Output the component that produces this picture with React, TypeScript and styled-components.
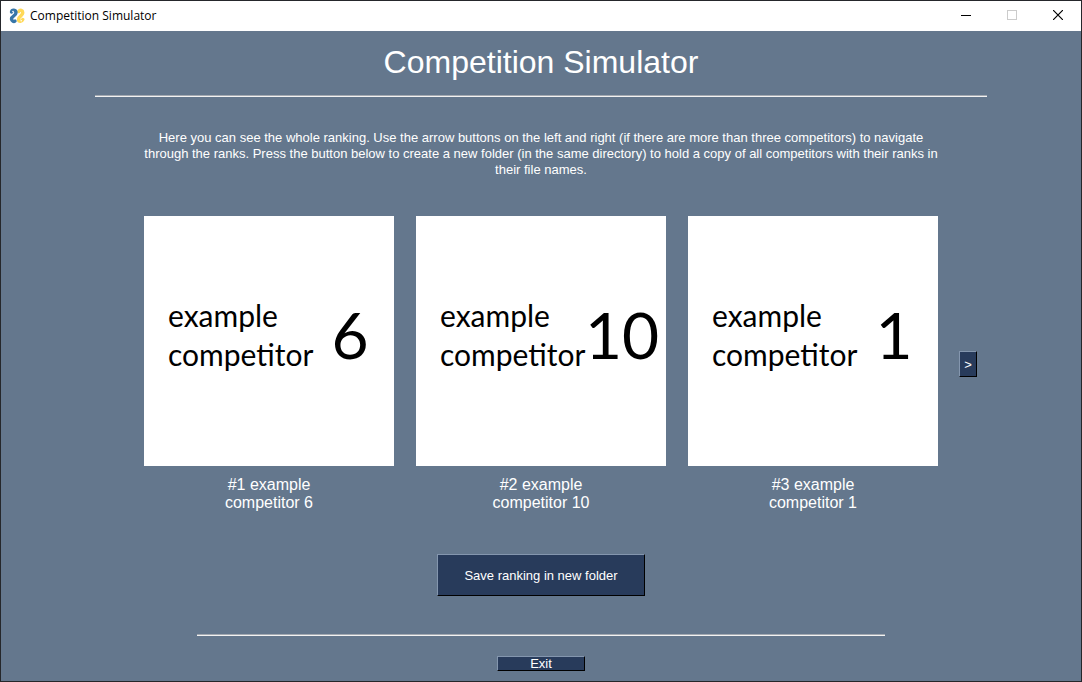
import React from "react";
import styled, { createGlobalStyle } from "styled-components";

const GlobalStyle = createGlobalStyle`
  * { box-sizing: border-box; }
  body {
    margin: 0;
    background: #64778d;
    font-family: "Liberation Sans", Arial, sans-serif;
    color: #ffffff;
  }
`;

const Window = styled.div`
  display: flex;
  flex-direction: column;
  min-height: 100vh;
  border: 1px solid #25272b;
  background: #64778d;
`;

const TitleBar = styled.header`
  display: flex;
  align-items: center;
  height: 30px;
  padding-left: 8px;
  background: #ffffff;
  color: #000000;
`;

const WindowTitle = styled.span`
  flex: 1;
  margin-left: 5px;
  font-family: "Open Sans", "Noto Sans", sans-serif;
  font-size: 12px;
  line-height: 16px;
`;

const CaptionButton = styled.button`
  display: flex;
  align-items: center;
  justify-content: center;
  width: 46px;
  height: 30px;
  padding: 0 0 2px;
  border: 0;
  background: transparent;
  color: #000000;

  &:disabled {
    color: #cccccc;
  }
`;

const Main = styled.main`
  display: flex;
  flex-direction: column;
  align-items: center;
`;

const Heading = styled.h1`
  margin: 12px 0 14px;
  font-size: 32px;
  font-weight: 400;
  line-height: 38px;
`;

const Separator = styled.hr<{ $width: number }>`
  width: ${(p) => p.$width}px;
  max-width: 100%;
  height: 2px;
  margin: 0;
  border: 0;
  border-top: 1px solid #a3a9b1;
  border-bottom: 1px solid #f2f2f2;
`;

const Intro = styled.p`
  max-width: 808px;
  margin: 33px 0 38px;
  font-size: 13px;
  line-height: 16px;
  text-align: center;
`;

const Ranking = styled.section`
  display: grid;
  grid-template-columns: 18px auto 18px;
  align-items: center;
  column-gap: 21px;
`;

const Cards = styled.div`
  display: flex;
  grid-column: 2;
  gap: 22px;
`;

const Card = styled.figure`
  width: 250px;
  margin: 0;
`;

const Picture = styled.div`
  display: flex;
  align-items: center;
  height: 250px;
  padding: 0 6px 12px 24px;
  background: #ffffff;
  color: #000000;
  font-family: Lato, sans-serif;
`;

const PictureLabel = styled.span`
  width: 144px;
  font-size: 30px;
  line-height: 39px;
`;

const PictureNumber = styled.span`
  flex: 1;
  font-size: 64px;
  line-height: 78px;
  text-align: center;
`;

const Caption = styled.figcaption`
  padding-top: 10px;
  font-size: 16px;
  line-height: 18px;
  text-align: center;
`;

const Button = styled.button<{ $width: number; $height: number }>`
  display: flex;
  align-items: center;
  justify-content: center;
  width: ${(p) => p.$width}px;
  height: ${(p) => p.$height}px;
  padding: 0;
  border: 1px solid;
  border-color: #8496ae #000000 #000000 #8496ae;
  background: #283b5b;
  color: #ffffff;
  font-family: inherit;
  font-size: 13px;
  line-height: 13px;
`;

const Actions = styled.div`
  margin: 42px 0 38px;
`;

const Footer = styled.footer`
  padding: 20px 0 10px;
`;

const competitors = [
  { rank: 1, id: 6 },
  { rank: 2, id: 10 },
  { rank: 3, id: 1 },
];

function Logo() {
  return (
    <svg
      width="16"
      height="16"
      viewBox="0 0 16 16"
      fill="none"
      strokeWidth="3.400"
      strokeLinecap="round"
      aria-hidden="true"
    >
      <path d="M9.800 3.500C11 1.500 14 2 13.700 5C13.400 8.200 9.500 8 9.500 11.500C9.800 14 13 13.700 13.800 11.500" stroke="#ffd958" />
      <path d="M2.500 4C3 1.500 7 1.500 7 4.800C7 8 2.600 7.800 2.500 11C2.800 13.300 4.800 14 6 13" stroke="#3776a8" />
      <circle cx="4" cy="3.500" r="0.800" fill="#ffffff" />
      <circle cx="12.200" cy="12.700" r="0.800" fill="#ffffff" />
    </svg>
  );
}

export default function App() {
  return (
    <Window>
      <GlobalStyle />
      <TitleBar>
        <Logo />
        <WindowTitle>Competition Simulator</WindowTitle>
        <CaptionButton aria-label="Minimize">
          <svg width="10" height="10" stroke="currentColor" shapeRendering="crispEdges">
            <path d="M0 5.500h10" />
          </svg>
        </CaptionButton>
        <CaptionButton aria-label="Maximize" disabled>
          <svg width="10" height="10" stroke="currentColor" fill="none" shapeRendering="crispEdges">
            <path d="M.5.5h9v9h-9Z" />
          </svg>
        </CaptionButton>
        <CaptionButton aria-label="Close">
          <svg width="10" height="10" stroke="currentColor" strokeWidth="1.200">
            <path d="M0 0l10 10M10 0L0 10" />
          </svg>
        </CaptionButton>
      </TitleBar>
      <Main>
        <Heading>Competition Simulator</Heading>
        <Separator $width={892} />
        <Intro>
          Here you can see the whole ranking. Use the arrow buttons on the left and right (if there
          are more than three competitors) to navigate through the ranks. Press the button below to
          create a new folder (in the same directory) to hold a copy of all competitors with their
          ranks in their file names.
        </Intro>
        <Ranking>
          <Cards>
            {competitors.map(({ rank, id }) => (
              <Card key={rank}>
                <Picture>
                  <PictureLabel>
                    example
                    <br />
                    competitor
                  </PictureLabel>
                  <PictureNumber>{id}</PictureNumber>
                </Picture>
                <Caption>
                  #{rank} example
                  <br />
                  competitor {id}
                </Caption>
              </Card>
            ))}
          </Cards>
          <Button $width={18} $height={26}>&gt;</Button>
        </Ranking>
        <Actions>
          <Button $width={208} $height={42}>Save ranking in new folder</Button>
        </Actions>
        <Separator $width={688} />
        <Footer>
          <Button $width={88} $height={15}>Exit</Button>
        </Footer>
      </Main>
    </Window>
  );
}
